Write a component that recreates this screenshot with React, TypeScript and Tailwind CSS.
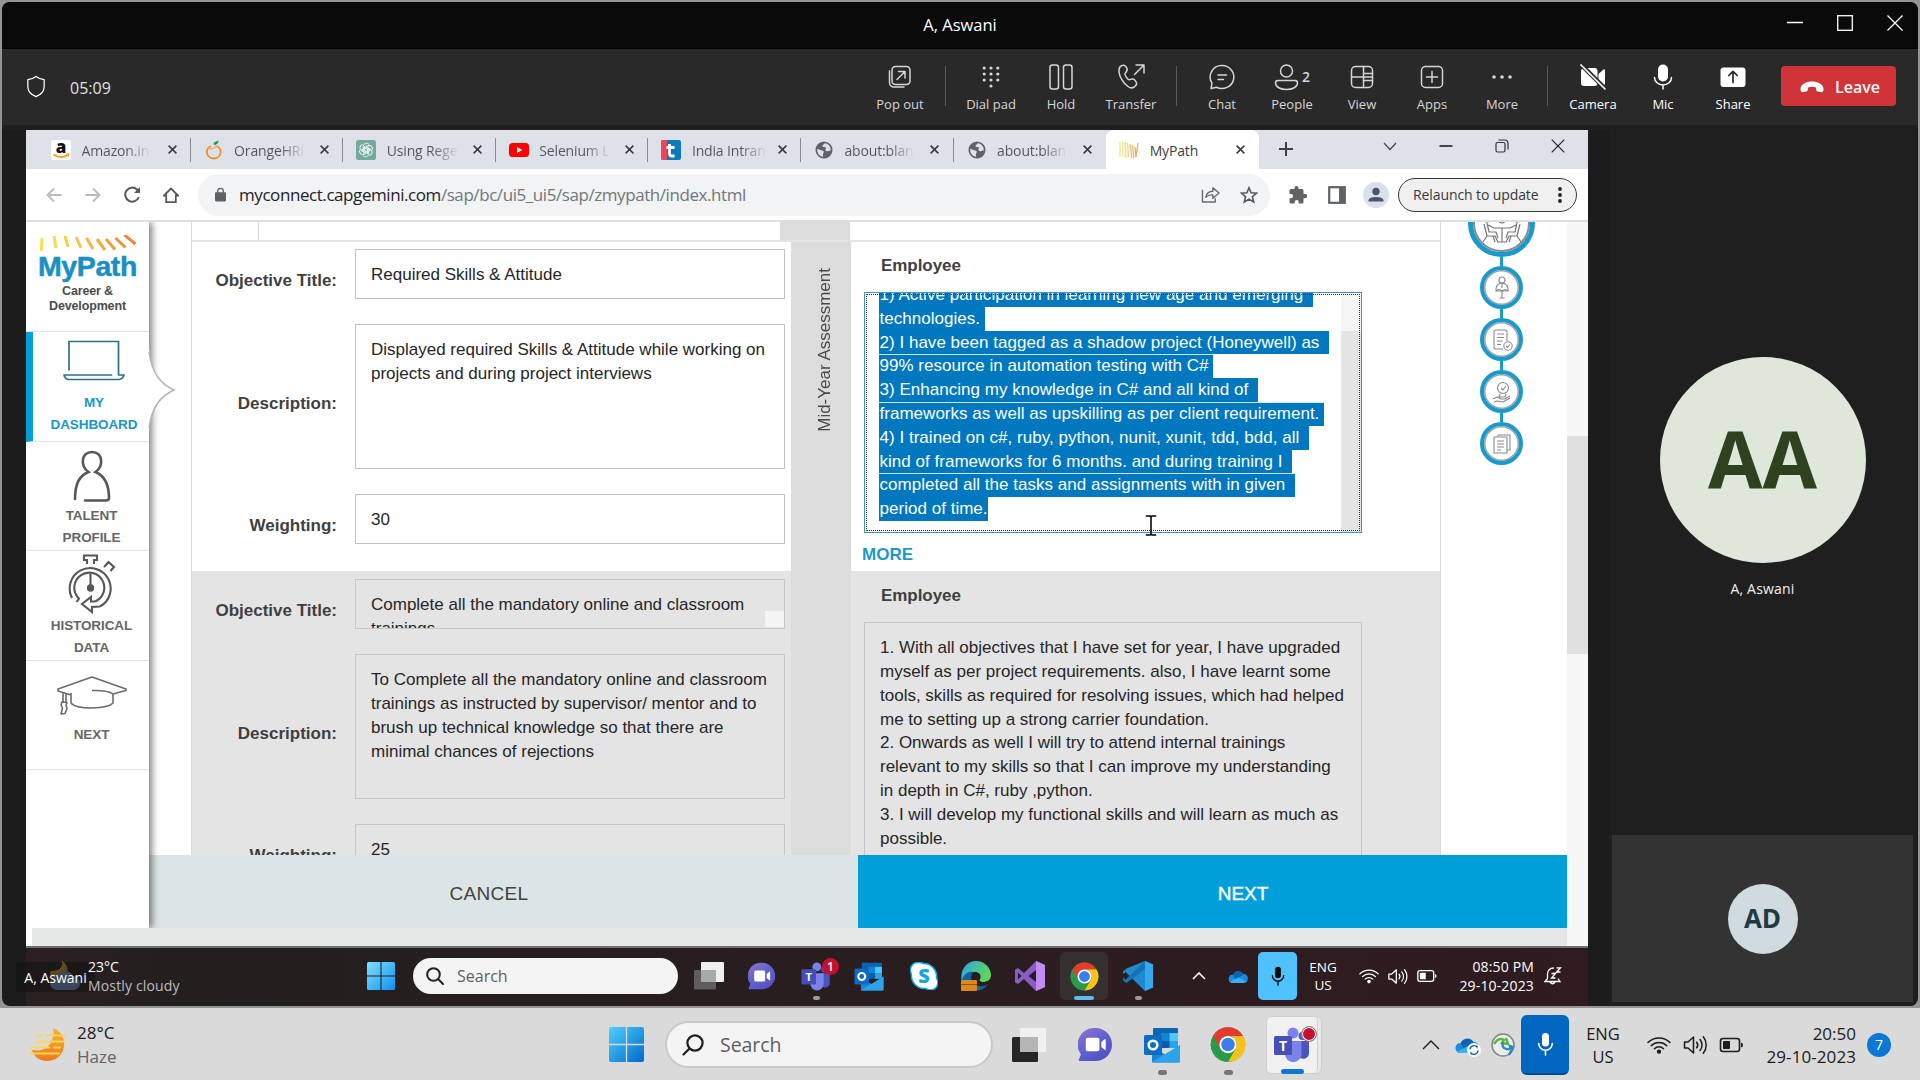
import type { ReactNode } from "react";

const segoe = "font-['Open_Sans','Noto_Sans',sans-serif]";
const arial = "font-['Liberation_Sans',Arial,sans-serif]";

/* ---------- shared brand glyphs ---------- */

function WindowsLogo({ id, from, to, className }: { id: string; from: string; to: string; className: string }) {
  return (
    <svg viewBox="0 0 36 36" className={className}>
      <defs>
        <linearGradient id={id} x1="0" y1="0" x2="1" y2="1">
          <stop offset="0" stopColor={from} />
          <stop offset="1" stopColor={to} />
        </linearGradient>
      </defs>
      <path
        fill={`url(#${id})`}
        d="M2 0h15.3v17.3H0V2a2 2 0 0 1 2-2zM18.7 0H34a2 2 0 0 1 2 2v15.300H18.700zM0 18.700h17.300V36H2a2 2 0 0 1-2-2zM18.700 18.700H36V34a2 2 0 0 1-2 2H18.700z"
      />
    </svg>
  );
}

function ChromeLogo({ className }: { className: string }) {
  return (
    <svg viewBox="0 0 48 48" className={className}>
      <circle cx="24" cy="24" r="23" fill="#34a048" />
      <path d="M4.080 12.500A23 23 0 0 1 43.920 12.500H24A11.500 11.500 0 0 0 14 29.750z" fill="#e53a2d" />
      <path d="M43.920 12.500A23 23 0 0 1 24 47l10-17.250A11.500 11.500 0 0 0 24 12.500z" fill="#fbc116" />
      <path d="M24 47A23 23 0 0 1 4.080 12.500L14 29.750a11.500 11.500 0 0 0 20 0z" fill="#2b9a48" />
      <circle cx="24" cy="24" r="11.500" fill="#fff" />
      <circle cx="24" cy="24" r="9" fill="#3b7ded" />
    </svg>
  );
}

function TeamsLogo({ className }: { className: string }) {
  return (
    <svg viewBox="0 0 36 36" className={className}>
      <circle cx="28.500" cy="9" r="4" fill="#5059c9" />
      <path d="M22 14h13v11a6 6 0 0 1-11 4z" fill="#4b53bc" />
      <circle cx="19" cy="6" r="5.500" fill="#7b83eb" />
      <path d="M11 14h16.500v13a8.200 8.200 0 0 1-16.500 0z" fill="#7b83eb" />
      <rect x="0" y="9" width="18" height="19" rx="1.500" fill="#464eb8" />
      <text x="9" y="23.500" fill="#fff" fontSize="14" fontWeight="700" textAnchor="middle" fontFamily="Open Sans">T</text>
    </svg>
  );
}

function OutlookLogo({ className }: { className: string }) {
  return (
    <svg viewBox="0 0 36 36" className={className}>
      <path d="M10 1h23a1 1 0 0 1 1 1v18H9V2a1 1 0 0 1 1-1z" fill="#0a64b4" />
      <path d="M17 6h8.500v8H17z" fill="#1684d6" />
      <path d="M25.500 6H34v8h-8.500z" fill="#4ccaf8" />
      <path d="M17 14h8.500v7H17z" fill="#0d5da5" />
      <path d="M25.500 14H34v7h-8.500z" fill="#2aa5e8" />
      <path d="M8 19l14 9 14-10v16.500a1 1 0 0 1-1 1H9a1 1 0 0 1-1-1z" fill="#1b86d8" />
      <path d="M8 35L36 18v16.500a1 1 0 0 1-1 1H9z" fill="#2ba4ea" />
      <rect x="0" y="8" width="18" height="20" rx="1.500" fill="#0b6cc4" />
      <circle cx="9" cy="18" r="4.300" fill="none" stroke="#fff" strokeWidth="2.600" />
    </svg>
  );
}

function ChatLogo({ id, className }: { id: string; className: string }) {
  return (
    <svg viewBox="0 0 36 36" className={className}>
      <defs>
        <linearGradient id={id} x1="0" y1="0" x2=".7" y2="1">
          <stop offset="0" stopColor="#9a6fcf" />
          <stop offset=".5" stopColor="#5f66cf" />
          <stop offset="1" stopColor="#5450c0" />
        </linearGradient>
      </defs>
      <path d="M18 1a17 17 0 1 1 0 34H2c-1.200 0-1.500-.8-1-1.600L3 28A17 17 0 0 1 18 1z" fill={`url(#${id})`} />
      <rect x="8" y="11" width="14" height="14" rx="2" fill="#fff" />
      <path d="M24 15.500l3.500-3q1-.6 1 .7v9.600q0 1.300-1 .7l-3.500-3z" fill="#fff" />
    </svg>
  );
}

function Cloud({ className }: { className: string }) {
  return (
    <svg viewBox="0 0 24 16" className={className}>
      <path d="M6 6a7 7 0 0 1 12.500-1A5 5 0 0 1 24 10a5 5 0 0 1-5 6H5A5 5 0 0 1 6 6z" fill="#1a8be0" />
      <path d="M6 6a7 7 0 0 1 12.500-.500L9 13z" fill="#0a63b5" />
      <path d="M2.500 14.500L13 9l9 5.500a5 5 0 0 1-3 1.500H5q-1.500 0-2.500-1.500z" fill="#37b0f5" />
    </svg>
  );
}

function MicGlyph({ className }: { className: string }) {
  return (
    <svg viewBox="0 0 16 24" className={className} fill="none" stroke="currentColor" strokeWidth="1.600" strokeLinecap="round">
      <rect x="4.500" y="1" width="7" height="13.500" rx="3.500" fill="currentColor" stroke="none" />
      <path d="M1.200 11.500a6.800 6.800 0 0 0 13.600 0M8 18.300V23" />
    </svg>
  );
}

function Wifi({ className }: { className: string }) {
  return (
    <svg viewBox="0 0 24 18" className={className} fill="none" stroke="currentColor" strokeWidth="1.500" strokeLinecap="round">
      <path d="M1 6.500a15.500 15.500 0 0 1 22 0M4.200 9.800a11 11 0 0 1 15.600 0M7.500 12.700a6.400 6.400 0 0 1 9 0" />
      <circle cx="12" cy="15.700" r="1.400" fill="currentColor" />
    </svg>
  );
}

function Speaker({ className }: { className: string }) {
  return (
    <svg viewBox="0 0 24 20" className={className} fill="none" stroke="currentColor" strokeWidth="1.500" strokeLinecap="round" strokeLinejoin="round">
      <path d="M1 7v6h3.500l5.500 5V2L4.500 7zM13.200 7.200a4.500 4.500 0 0 1 0 5.600M16.500 4.500a8.500 8.500 0 0 1 0 11M19.800 1.800a13 13 0 0 1 0 16.400" />
    </svg>
  );
}

function Battery({ className }: { className: string }) {
  return (
    <svg viewBox="0 0 24 16" className={className}>
      <rect x="1" y="1.500" width="19" height="13" rx="2.500" fill="none" stroke="currentColor" strokeWidth="1.600" />
      <rect x="3.500" y="4" width="7" height="8" rx=".8" fill="currentColor" />
      <path d="M21.500 5.500q2 .5 2 2.500t-2 2.500z" fill="currentColor" />
    </svg>
  );
}

/* ---------- call window ---------- */

function CallTitleBar() {
  return (
    <div className="relative flex h-[47px] items-center justify-center border-b border-black bg-[#0a0a0a] text-white">
      <span className="text-[16.500px] leading-none">A, Aswani</span>
      <div className="absolute right-[15px] top-[13px] flex gap-[34px]">
        <svg viewBox="0 0 16 16" className="h-4 w-4" stroke="#fff" fill="none"><path d="M0 7.500h16" strokeWidth="1.300" /></svg>
        <svg viewBox="0 0 16 16" className="h-4 w-4" stroke="#fff" fill="none"><rect x=".7" y=".7" width="14.600" height="14.600" strokeWidth="1.300" /></svg>
        <svg viewBox="0 0 16 16" className="h-4 w-4" stroke="#fff" fill="none"><path d="M.5.5l15 15m0-15l-15 15" strokeWidth="1.300" /></svg>
      </div>
    </div>
  );
}

function CallButton({ label, bright, children }: { label: string; bright?: boolean; children: ReactNode }) {
  return (
    <div className={`flex w-[70px] flex-col items-center ${bright ? "text-white" : "text-[#d6d6d6]"}`}>
      <svg viewBox="0 0 28 28" className="h-7 w-7 overflow-visible" fill="none" stroke="currentColor" strokeWidth="1.500" strokeLinecap="round" strokeLinejoin="round">
        {children}
      </svg>
      <span className="mt-[5px] whitespace-nowrap text-[13px] leading-[16px]">{label}</span>
    </div>
  );
}

function CallSeparator() {
  return <div className="mx-[10px] mt-[3px] h-10 w-px bg-[#5a5a5a]" />;
}

function CallToolbar() {
  const cols = [7.200, 14, 20.800];
  const rows = [5, 11, 17];
  return (
    <div className="flex h-[76px] bg-[#292929]">
      <svg viewBox="0 0 20 24" className="ml-6 mt-[26px] h-[23px] w-5" fill="none" stroke="#fff" strokeWidth="1.300" strokeLinejoin="round">
        <path d="M10 1.500c2.500 2 5 3 8.500 3.200V12c0 5-3 8.500-8.500 10.500C4.500 20.500 1.500 17 1.500 12V4.700C5 4.500 7.500 3.500 10 1.500z" />
      </svg>
      <span className="ml-[24px] mt-[28px] text-[16px] leading-[22px] text-[#e0e0e0]">05:09</span>
      <div className="ml-auto flex pr-[22px] pt-[14px]">
        <CallButton label="Pop out">
          <path d="M3.500 8v11.500a4.500 4.500 0 0 0 4.500 4.500h10" />
          <rect x="6" y="3.500" width="18" height="18" rx="3.500" />
          <path d="M11 16.500l8-8m-6.500 0H19V15" />
        </CallButton>
        <CallSeparator />
        <CallButton label="Dial pad">
          <g fill="currentColor" stroke="none">
            {rows.map((y) => cols.map((x) => <circle key={`${x}-${y}`} cx={x} cy={y} r="1.600" />))}
            <circle cx="14" cy="23" r="1.600" />
          </g>
        </CallButton>
        <CallButton label="Hold">
          <rect x="3" y="2" width="8.500" height="24" rx="2.500" />
          <rect x="16.500" y="2" width="8.500" height="24" rx="2.500" />
        </CallButton>
        <CallButton label="Transfer">
          <path d="M4 3c3-2 5 0 6 2.500.8 2-.8 3.500-2 5-.6 1 2.500 6.500 4.500 6.300 1.500-.5 3-1.800 4.700-.3 1.500 1.500 3.500 3.500 2 5.500C17 25 14.500 26 11 23.500 6 20 2.500 13.500 2 9c-.2-2.500.3-5 2-6z" />
          <path d="M17.500 11.500L27 2m-8 0h8v8" />
        </CallButton>
        <CallSeparator />
        <CallButton label="Chat">
          <path d="M14 2.500a12 11.500 0 1 1-5.500 21.800L3 25.500l1-5.300A11.500 11.500 0 0 1 14 2.500zM10 12h8.500M10 16.500h5.500" />
        </CallButton>
        <CallButton label="People">
          <circle cx="8.500" cy="8" r="6" />
          <path d="M-2.500 20q0-2.500 2.500-2.500h17q2.500 0 2.500 2.500c0 4-5 6.500-11 6.500s-11-2.500-11-6.500z" />
          <text x="24" y="19" fill="currentColor" stroke="none" fontSize="14" fontWeight="600">2</text>
        </CallButton>
        <CallButton label="View">
          <rect x="3.500" y="3.500" width="21" height="21" rx="4" />
          <path d="M15.500 3.500v21M3.500 14h21M15.500 10.500h9M15.500 17.500h9" />
        </CallButton>
        <CallButton label="Apps">
          <rect x="3.500" y="3.500" width="21" height="21" rx="4" />
          <path d="M14 8.500v11M8.500 14h11" />
        </CallButton>
        <CallButton label="More">
          <g fill="currentColor" stroke="none">
            <circle cx="6" cy="14" r="1.800" />
            <circle cx="14" cy="14" r="1.800" />
            <circle cx="22" cy="14" r="1.800" />
          </g>
        </CallButton>
        <CallSeparator />
        <CallButton label="Camera" bright>
          <path d="M4 5h11.500q3 0 3 3v12q0 3-3 3H5q-3 0-3-3V8q0-1.500 2-3zM19.500 11l5-4.500q1.500-.8 1.500 1v13q0 1.800-1.500 1l-5-4.500z" fill="currentColor" stroke="none" />
          <path d="M2 1.500l24 24" stroke="#292929" strokeWidth="4.500" />
          <path d="M2 2l24 24" strokeWidth="1.700" />
        </CallButton>
        <CallButton label="Mic" bright>
          <rect x="9" y="1.500" width="10" height="17" rx="5" fill="currentColor" stroke="none" />
          <path d="M5.500 14.500a8.500 7.500 0 0 0 17 0M14 22v4" />
        </CallButton>
        <CallButton label="Share" bright>
          <rect x="1.500" y="4.500" width="25" height="19.500" rx="3" fill="currentColor" stroke="none" />
          <path d="M14 19.500v-11M9.800 12.500L14 8.300l4.200 4.200" stroke="#292929" strokeWidth="1.700" />
        </CallButton>
        <div className="ml-[13px] mt-[3px] flex h-10 w-[115px] items-center rounded-[4px] bg-[#d13438] pl-[19px] pt-[2px] text-white">
          <svg viewBox="0 0 24 12" className="h-3 w-6" fill="currentColor">
            <path d="M12 .5c5.500 0 11.500 2.500 11.500 7.500 0 2.800-1 3.500-3 3.100l-2.500-.5c-1.500-.3-2-1.300-1.900-2.800 0-1.200.3-1.800-4.100-1.800s-4.100.6-4.100 1.800c.1 1.500-.4 2.500-1.900 2.800l-2.500.5c-2 .4-3-.3-3-3.100C.5 3 6.500.5 12 .5z" />
          </svg>
          <span className="ml-[11px] text-[16px] font-semibold">Leave</span>
        </div>
      </div>
    </div>
  );
}

/* ---------- browser ---------- */

const favs = {
  amazon: (
    <svg viewBox="0 0 20 20" className="h-5 w-5">
      <rect width="20" height="20" rx="2" fill="#fff" />
      <text x="10" y="13" textAnchor="middle" fontSize="17" fontWeight="800" fontFamily="Open Sans" fill="#111">a</text>
      <path d="M2.500 14.500q7 5 14 .5" fill="none" stroke="#f59b1c" strokeWidth="1.700" />
      <path d="M15 14h2.800l-.6 2.600" fill="none" stroke="#f59b1c" strokeWidth="1.200" />
    </svg>
  ),
  orange: (
    <svg viewBox="0 0 20 20" className="h-5 w-5 overflow-visible" fill="none">
      <path d="M7 6a7 6.500 0 1 0 5.500 0" stroke="#ee8d2f" strokeWidth="1.800" />
      <path d="M3.500 8.500q6 1.500 8.500-2.500" stroke="#f5ab5e" strokeWidth="1.200" />
      <path d="M9.500 4.500C9.500 1.500 12 2 14.500.5c.3 3-2.500 5.500-5 4z" fill="#2c9c4a" />
    </svg>
  ),
  gpt: (
    <svg viewBox="0 0 20 20" className="h-5 w-5" fill="none" stroke="#e8f5f0" strokeWidth="1">
      <rect width="20" height="20" rx="2.500" fill="#74aa9c" stroke="none" />
      {[0, 60, 120, 180, 240, 300].map((a) => (
        <path key={a} transform={`rotate(${a} 10 10)`} d="M7.200 11.600V6.200a3.300 3.300 0 0 1 5.800-1.800M8.500 9.200l4.300-2.500" />
      ))}
    </svg>
  ),
  youtube: (
    <svg viewBox="0 0 20 14" className="h-[14px] w-5">
      <rect width="20" height="14" rx="3.500" fill="#f00" />
      <path d="M8 4l5.300 3L8 10z" fill="#fff" />
    </svg>
  ),
  t: (
    <svg viewBox="0 0 20 20" className="h-5 w-5">
      <rect width="20" height="20" rx="2" fill="#0b7ab8" />
      <path d="M2 0h4v20H2a2 2 0 0 1-2-2V2a2 2 0 0 1 2-2z" fill="#e8455f" />
      <path d="M8.500 4v9.500q0 2.500 2.500 2.500h2.500M5.500 7.500h8" fill="none" stroke="#fff" strokeWidth="2.800" />
    </svg>
  ),
  globe: (
    <svg viewBox="0 0 20 20" className="h-[18px] w-[18px]">
      <circle cx="10" cy="10" r="9.500" fill="#5f6368" />
      <path d="M2.500 8.500c2 .5 4 2 5.500 2s2 1.500 1.500 2.500-1 2-.5 4.500c-4-.5-7-4-6.500-9zM11 2.500c-1 1.500-3 1.500-2.500 3.500.5 1.500 3 0 3.500 1.500s-1.500 2.500.5 3.500c2 .8 4-.5 5-.5.3-4-2.500-7.500-6.500-8z" fill="#dee1e8" />
    </svg>
  ),
  mypath: (
    <svg viewBox="0 0 20 18" className="h-[18px] w-5" fill="none" strokeWidth="1.300">
      <path d="M1 1v15M3.500 1l.5 15" stroke="#f9e48c" />
      <path d="M6 1l1 16M8.500 2l1 14" stroke="#f8d27c" />
      <path d="M11 3l2 14M13.500 4l1.500 13" stroke="#f4b870" />
      <path d="M16 6l1 10 2-14" stroke="#efa95c" />
    </svg>
  ),
};

const tabs: { title: string; icon: ReactNode; active?: boolean }[] = [
  { title: "Amazon.in", icon: favs.amazon },
  { title: "OrangeHRI", icon: favs.orange },
  { title: "Using Rege", icon: favs.gpt },
  { title: "Selenium L", icon: favs.youtube },
  { title: "India Intran", icon: favs.t },
  { title: "about:blan", icon: favs.globe },
  { title: "about:blan", icon: favs.globe },
  { title: "MyPath", icon: favs.mypath, active: true },
];

function TabStrip() {
  return (
    <div className="flex h-[39px] bg-[#dee1e8] pl-[12px]">
      {tabs.map((t, i) => (
        <div
          key={i}
          className={`flex h-[39px] w-[152.600px] items-center pl-[13px] ${t.active ? "rounded-t-[8px] bg-white" : ""}`}
        >
          <span className="flex w-5 justify-center">{t.icon}</span>
          <span className="ml-[10.500px] w-[71px]">
            <span
              className={`inline-block whitespace-nowrap text-[14px] leading-5 tracking-[-0.150px] ${
                t.active ? "text-[#3c4043]" : "bg-gradient-to-r from-[#50555a] from-65% to-[#d6d9e0] bg-clip-text text-transparent"
              }`}
            >
              {t.title}
            </span>
          </span>
          <svg viewBox="0 0 10 10" className="ml-[15px] h-[9px] w-[9px] shrink-0" stroke="#36393d" strokeWidth="1.700" fill="none">
            <path d="M.7.7l8.600 8.600m0-8.600L.7 9.300" />
          </svg>
          {i < 6 && <span className="ml-auto h-6 w-px bg-[#878b92]" />}
        </div>
      ))}
      <svg viewBox="0 0 14 14" className="ml-[20px] mt-[12px] h-[14px] w-[14px]" stroke="#3c4043" strokeWidth="2"><path d="M7 0v14M0 7h14" /></svg>
      <div className="ml-auto mr-[23px] flex items-center gap-[42px] pb-[7px]">
        <svg viewBox="0 0 14 14" className="h-[14px] w-[14px]" stroke="#444" fill="none" strokeWidth="1.200"><path d="M1 4l6 6.500L13 4" /></svg>
        <svg viewBox="0 0 14 14" className="h-[14px] w-[14px]" stroke="#111" fill="none" strokeWidth="1.400"><path d="M.5 7h13" /></svg>
        <svg viewBox="0 0 14 14" className="h-[14px] w-[14px]" stroke="#333" fill="none" strokeWidth="1.200"><rect x="1" y="3.500" width="9" height="9.500" rx="1.500" /><path d="M3.500 1h6q3.500 0 3.500 3.500v6" /></svg>
        <svg viewBox="0 0 14 14" className="h-[14px] w-[14px]" stroke="#222" fill="none" strokeWidth="1.200"><path d="M.7.7l12.600 12.600m0-12.600L.7 13.300" /></svg>
      </div>
    </div>
  );
}

function AddressBar() {
  return (
    <div className="flex h-[53px] items-center border-b-2 border-[#dedfe0] bg-white pl-5">
      <svg viewBox="0 0 16 16" className="h-4 w-4" stroke="#babcbe" strokeWidth="1.900" fill="none"><path d="M15.500 8H1.500M8 1.500L1.500 8 8 14.500" /></svg>
      <svg viewBox="0 0 16 16" className="ml-[23px] h-4 w-4" stroke="#babcbe" strokeWidth="1.900" fill="none"><path d="M.5 8h14M8 1.500L14.500 8 8 14.500" /></svg>
      <svg viewBox="0 0 17 17" className="ml-[23px] h-[17px] w-[17px]" stroke="#55595d" strokeWidth="2" fill="none"><path d="M14.800 11A7 7 0 1 1 13 3.500l2 2" /><path d="M16 1v6h-6z" fill="#55595d" stroke="none" /></svg>
      <svg viewBox="0 0 16 16" className="ml-[22px] h-4 w-4" stroke="#55595d" strokeWidth="1.800" fill="none"><path d="M8 1.500L1 8.500h2.200v6.600h9.600V8.500H15z" /></svg>
      <div className="ml-[19px] flex h-[42px] w-[1072px] items-center rounded-full bg-[#f1f3f4] pl-[17px]">
        <svg viewBox="0 0 12 15" className="h-[15px] w-[11px]"><rect y="5" width="12" height="10" rx="1.200" fill="#5f6368" /><path d="M3 6V3.800a3 3 0 0 1 6 0V6" fill="none" stroke="#5f6368" strokeWidth="1.500" /></svg>
        <span className="ml-[13px] whitespace-nowrap text-[17px] tracking-[-0.430px] text-[#71767b]">
          <span className="text-[#1f2226]">myconnect.capgemini.com</span>/sap/bc/ui5_ui5/sap/zmypath/index.html
        </span>
        <svg viewBox="0 0 20 18" className="ml-auto h-[17px] w-[19px]" fill="none" stroke="#666a6e" strokeWidth="1.500" strokeLinejoin="round"><path d="M1.500 4v13H15v-4" /><path d="M5 12q1-6.500 7.500-6.500V2L19 7.500 12.500 13V9.500Q8 9 5 12z" /></svg>
        <svg viewBox="0 0 18 18" className="ml-5 mr-[12px] h-[18px] w-[18px]" fill="none" stroke="#55595d" strokeWidth="1.600"><path d="M9 1.800l2.100 5 5.400.4-4.100 3.500 1.300 5.300L9 13.100 4.300 16l1.300-5.300-4.100-3.500 5.400-.4z" /></svg>
      </div>
      <svg viewBox="0 0 18 18" className="ml-[19px] h-[18px] w-[18px]" fill="#5f6368"><path d="M16 8h-1.500V4.500A1.500 1.500 0 0 0 13 3H9.500V2a2 2 0 0 0-4 0v1H2a1.500 1.500 0 0 0-1.500 1.500V8H2a2 2 0 0 1 0 4.200H.5v3.800A1.500 1.500 0 0 0 2 17.500h3.700V16a2 2 0 0 1 4 0v1.500H13a1.500 1.500 0 0 0 1.500-1.500v-3.800H16a2.100 2.100 0 0 0 0-4.200z" /></svg>
      <svg viewBox="0 0 18 18" className="ml-[21px] h-[18px] w-[18px]"><rect x="1.200" y="1.200" width="15.600" height="15.600" fill="#fff" stroke="#5f6368" strokeWidth="2.200" /><rect x="11" y="1" width="6" height="16" fill="#5f6368" /></svg>
      <svg viewBox="0 0 26 26" className="ml-[17px] h-[26px] w-[26px]"><circle cx="13" cy="13" r="13" fill="#dbe0ea" /><circle cx="13" cy="9.500" r="3.700" fill="#4a5672" /><path d="M5.500 19.500v-1q0-3.500 7.500-3.500t7.500 3.500v1z" fill="#4a5672" /></svg>
      <div className="ml-[9px] flex h-[34px] w-[179px] items-center rounded-full border-[1.500px] border-[#36393c] bg-[#f0f0f0] pl-[14px] text-[14px] tracking-[-0.100px] text-[#36393c]">
        <span className="whitespace-nowrap">Relaunch to update</span>
        <svg viewBox="0 0 4 16" className="ml-[19px] h-4 w-1"><circle cx="2" cy="2" r="1.900" fill="#222" /><circle cx="2" cy="8" r="1.900" fill="#222" /><circle cx="2" cy="14" r="1.900" fill="#222" /></svg>
      </div>
    </div>
  );
}

/* ---------- MyPath page ---------- */

const dashes = [
  { c: "#f6e04a", x: 3, dx: -0.500, y1: 3, y2: 16 },
  { c: "#f6dc4a", x: 15, dx: 2, y1: 1, y2: 13 },
  { c: "#f5d046", x: 26, dx: 3, y1: 1, y2: 12 },
  { c: "#f4c544", x: 37, dx: 5, y1: 2, y2: 13 },
  { c: "#f2b840", x: 47.500, dx: 6.500, y1: 3, y2: 14 },
  { c: "#f0ab3c", x: 58, dx: 8, y1: 4, y2: 15 },
  { c: "#ee9f3a", x: 67, dx: 9, y1: 4, y2: 14.500 },
  { c: "#eb9438", x: 76.500, dx: 10, y1: 3, y2: 12.500 },
  { c: "#e88a3a", x: 85.500, dx: 11, y1: 0, y2: 9 },
];

function SideItem({ lines, pad, children, active }: { lines: string[]; pad: string; children: ReactNode; active?: boolean }) {
  return (
    <div className={`flex flex-col items-center border-b border-[#e2e4e5] ${active ? "h-[110px] border-l-[7px] border-l-[#009fda] pl-[6px] text-[#1a97c6]" : "h-[109.300px] pl-[8px] text-[#666]"}`}>
      {children}
      <div className={`text-center text-[13.500px] font-bold leading-[22px] tracking-[-0.100px] ${pad}`}>
        {lines.map((l) => <div key={l}>{l}</div>)}
      </div>
    </div>
  );
}

function Sidebar() {
  return (
    <div className="relative z-10 w-[123px] shrink-0 bg-white shadow-[3px_0_7px_rgba(0,0,0,0.500)]">
      <div className="flex h-[110px] flex-col items-center border-b border-[#e2e4e5] pt-[13px]">
        <svg viewBox="0 0 98 16" className="h-4 w-[98px]" strokeWidth="3">
          {dashes.map((d) => <line key={d.c} x1={d.x} y1={d.y1} x2={d.x + d.dx} y2={d.y2} stroke={d.c} />)}
        </svg>
        <div className="text-[28.500px] font-bold leading-[30px] tracking-[-0.400px] text-[#1a90c2] [-webkit-text-stroke:0.500px_#1a90c2]">MyPath</div>
        <div className="mt-[3px] text-center text-[12.500px] font-bold leading-[15px] tracking-[-0.150px] text-[#4c4c4c]">
          <div>Career &amp;</div>
          <div>Development</div>
        </div>
      </div>
      <SideItem lines={["MY", "DASHBOARD"]} pad="mt-[10px]" active>
        <svg viewBox="0 0 62 42" className="mt-[8px] h-[42px] w-[62px]" fill="none" stroke="#2f6f8a" strokeWidth="1.700" strokeLinecap="round">
          <path d="M6 30V1.500h49.500V35M2 35h46.500M1 35q1 4 4.500 4.500H56q4-.5 5-4.500h-5" />
        </svg>
      </SideItem>
      <SideItem lines={["TALENT", "PROFILE"]} pad="mt-[3px]">
        <svg viewBox="0 0 38 52" className="mt-[8px] h-[52px] w-[38px]" fill="none" stroke="#575757" strokeWidth="2.600" strokeLinecap="round">
          <path d="M2 49C2 34 6 26 15.500 22 7 16 8 2 19 2s12 14 3.500 20C32 26 36 34 36 48q0 2.500-3 2.500H12" />
        </svg>
      </SideItem>
      <SideItem lines={["HISTORICAL", "DATA"]} pad="mt-[1px]">
        <svg viewBox="0 0 48 60" className="mt-[3px] h-[60px] w-12" fill="none" stroke="#575757" strokeWidth="2.100">
          <path d="M19 10V6h-3V1.500h13V6h-3v4M37 12l3.500-4 5.500 5-3.500 4M36 13l3-3" />
          <path d="M4 44A20.500 20.500 0 1 1 32 52.500M8.500 48l2.500-3.500-1-1A15 15 0 1 1 27 47.500M32 52.500l-8 .5v5L14 50l9-7v4.500h4" />
          <path d="M22.500 20v14" />
          <circle cx="22.500" cy="34" r="2.600" fill="#575757" />
        </svg>
      </SideItem>
      <SideItem lines={["NEXT"]} pad="mt-[8px]">
        <svg viewBox="0 0 70 40" className="mt-[15px] h-10 w-[70px]" fill="none" stroke="#6b6b6b" strokeWidth="1.600" strokeLinejoin="round">
          <path d="M56 18l13-3.500v-1.500L35 1 1 13v2l13 4M6 17v9M9 18v8M5 26l-1 3 1.500 3L4 38l4-.5 2-5-1-3 1-3zM14 17v10q4 5 21 5 17-.5 21-5v-9q-5-4-21-3.500" />
        </svg>
      </SideItem>
      <svg viewBox="0 0 30 84" className="absolute left-[121px] top-[126px] h-[84px] w-[30px] overflow-visible">
        <path d="M0 0h2C4 26 14 36 27 42 14 48 4 58 2 84H0z" fill="#fff" />
        <path d="M2 4C5 26 14 36 27 42 14 48 5 58 2 80" fill="none" stroke="#b4b4b4" strokeWidth="1.500" />
      </svg>
    </div>
  );
}

function Field({ label, value, tall, gray, clipped }: { label: string; value: string[]; tall?: boolean; gray?: boolean; clipped?: boolean }) {
  return (
    <div className="flex">
      <div className="flex w-[145px] items-center justify-end pt-[14px] text-[17px] font-bold text-[#3f3f3f]">{label}</div>
      <div
        className={`ml-[18px] flex w-[430px] justify-between overflow-hidden border pl-[15px] pt-[13px] text-[17px] leading-6 text-[#262626] ${
          tall ? "h-[145px]" : "h-[50px]"
        } ${gray ? "border-[#c6c6c6]" : "border-[#c2c2c2]"}`}
      >
        <div className="whitespace-nowrap">
          {value.map((v) => <div key={v}>{v}</div>)}
        </div>
        {clipped && <div className="mt-[18px] h-4 w-[19px] shrink-0 bg-[#f4f4f4]" />}
      </div>
    </div>
  );
}

const selected = [
  { t: "1) Active participation in learning new age and emerging", w: "w-[433.500px]", gap: false },
  { t: "technologies.", w: "w-[106px]", gap: false },
  { t: "2) I have been tagged as a shadow project (Honeywell) as", w: "w-[449.500px]", gap: false },
  { t: "99% resource in automation testing with C#", w: "w-[334px]", gap: true },
  { t: "3) Enhancing my knowledge in C# and all kind of", w: "w-[378.500px]", gap: false },
  { t: "frameworks as well as upskilling as per client requirement.", w: "w-[445px]", gap: true },
  { t: "4) I trained on c#, ruby, python, nunit, xunit, tdd, bdd, all", w: "w-[429.500px]", gap: false },
  { t: "kind of frameworks for 6 months. and during training I", w: "w-[413px]", gap: false },
  { t: "completed all the tasks and assignments with in given", w: "w-[415.500px]", gap: true },
  { t: "period of time.", w: "w-[109px]", gap: false },
];

const review = [
  "1. With all objectives that I have set for year, I have upgraded",
  "myself as per project requirements. also, I have learnt some",
  "tools, skills as required for resolving issues, which had helped",
  "me to setting up a strong carrier foundation.",
  "2. Onwards as well I will try to attend internal trainings",
  "relevant to my skills so that I can improve my understanding",
  "in depth in C#, ruby ,python.",
  "3. I will develop my functional skills and will learn as much as",
  "possible.",
];

function ObjectiveTable() {
  return (
    <div className="w-[1250px] shrink-0 border-x border-[#dcdcdc]">
      <div className="flex h-5 border-b-2 border-[#e3e3e3]">
        <div className="w-[67px] border-r border-[#d6d6d6]" />
        <div className="w-[521px]" />
        <div className="w-[70px] bg-[#dcdcdc]" />
      </div>
      <div className="flex h-[329px]">
        <div className="flex w-[599px] flex-col gap-[25px] pt-[7px]">
          <Field label="Objective Title:" value={["Required Skills & Attitude"]} />
          <Field label="Description:" tall value={["Displayed required Skills & Attitude while working on", "projects and during project interviews"]} />
          <Field label="Weighting:" value={["30"]} />
        </div>
        <div className="flex w-[60px] items-start justify-center bg-[#dcdcdc] pl-[8px] pt-[26px]">
          <span className="rotate-180 whitespace-nowrap text-[17px] leading-5 text-[#484848] [writing-mode:vertical-rl]">Mid-Year Assessment</span>
        </div>
        <div className="flex flex-col">
          <div className="ml-[30px] mt-[14px] text-[17px] font-bold leading-5 tracking-[-0.050px] text-[#3f3f3f]">Employee</div>
          <div className="relative ml-[13px] mt-[16px] h-[241px] w-[498px] border border-[#3e94c4] bg-white">
            <div className="flex h-[239px] justify-between overflow-hidden">
              <div className="-mt-[10px] ml-[14px] text-[17px] leading-[23.800px] tracking-[0.025px] text-white">
                {selected.map((l) => (
                  <div key={l.t} className={`h-[23.800px] whitespace-nowrap bg-[#0078bf] pl-[0.500px] ${l.w} ${l.gap ? "shadow-[inset_0_1px_0_#cfe6f3]" : ""}`}>
                    {l.t}
                  </div>
                ))}
              </div>
              <div className="w-5 bg-[#e4e4e4]">
                <div className="h-[38px] bg-[#f5f5f5]" />
              </div>
            </div>
            <div className="pointer-events-none absolute inset-px border border-dotted border-[#333]" />
            <svg viewBox="0 0 12 22" className="absolute left-[280px] top-[222px] h-[21px] w-3" stroke="#000" strokeWidth="1.600" fill="none">
              <path d="M.5 1H5l1 1 1-1h4.500M.5 21H5l1-1 1 1h4.500M6 2v18" />
            </svg>
          </div>
          <div className="ml-[11px] mt-[12px] text-[17px] font-bold leading-5 text-[#1a9acb]">MORE</div>
        </div>
      </div>
      <div className="flex h-[330px] bg-[#e4e4e4]">
        <div className="flex w-[599px] flex-col gap-[25px] pt-[8px]">
          <Field gray clipped label="Objective Title:" value={["Complete all the mandatory online and classroom", "trainings"]} />
          <Field
            gray
            tall
            label="Description:"
            value={[
              "To Complete all the mandatory online and classroom",
              "trainings as instructed by supervisor/ mentor and to",
              "brush up technical knowledge so that there are",
              "minimal chances of rejections",
            ]}
          />
          <Field gray label="Weighting:" value={["25"]} />
        </div>
        <div className="w-[60px] bg-[#dcdcdc]" />
        <div className="flex flex-col">
          <div className="ml-[30px] mt-[15px] text-[17px] font-bold leading-5 tracking-[-0.050px] text-[#3f3f3f]">Employee</div>
          <div className="ml-[13px] mt-[16px] h-[300px] w-[498px] border border-[#c6c6c6] pl-[15px] pt-[13px] text-[17px] leading-[23.850px] text-[#262626]">
            {review.map((l) => <div key={l} className="whitespace-nowrap">{l}</div>)}
          </div>
        </div>
      </div>
    </div>
  );
}

function Step({ children }: { children: ReactNode }) {
  return (
    <>
      <div className="h-[9px] w-[3px] shrink-0 bg-[#1a9acb]" />
      <div className="flex h-[43px] w-[43px] shrink-0 items-center justify-center rounded-full border-4 border-[#1a9acb] bg-white shadow-[inset_0_0_0_1.500px_#a5a5a5]">
        <svg viewBox="0 0 24 24" className="h-6 w-6" fill="none" stroke="#8a8a8a" strokeWidth="1.100" strokeLinejoin="round">{children}</svg>
      </div>
    </>
  );
}

function Timeline() {
  return (
    <div className="flex w-[126px] flex-col items-center pr-[5px]">
      <div className="-mt-[32px] flex h-[67px] w-[67px] shrink-0 items-center justify-center rounded-full border-[5px] border-[#1a9acb] bg-white shadow-[inset_0_0_0_2px_#8a8a8a]">
        <svg viewBox="0 0 40 30" className="mt-[10px] h-[30px] w-10" fill="none" stroke="#777" strokeWidth="1.200" strokeLinejoin="round">
          <path d="M12 14h16M20 14v14M15 28h10M2 10l3 12h8l3 6M38 10l-3 12h-8l-3 6M5 22L1 28M11 22l2 6M35 22l4 6M29 22l-2 6M5 9l2 9h7l2 6M35 9l-2 9h-7l-2 6M6 11l6 3M34 11l-6 3" />
          <circle cx="5" cy="5" r="3" />
          <circle cx="35" cy="5" r="3" />
          <circle cx="20" cy="6" r="3" />
        </svg>
      </div>
      <Step>
        <circle cx="12" cy="4" r="3" />
        <path d="M6 15q-.5-6 4-7.500h4q4.500 1.500 4 7.500M12 8v4M6 15q3-3 6 0 3-3 6 0zM12 15v7M9.500 22h5" />
      </Step>
      <Step>
        <path d="M17 13V4q0-2-2-2H6Q4 2 4 4v15q0 2 2 2h7M7 6h7M7 9.500h7M7 13h6M7 16.500h4" />
        <circle cx="18" cy="18" r="4.200" />
        <path d="M16 18l1.500 1.500 2.500-3" />
      </Step>
      <Step>
        <circle cx="13" cy="8" r="5.500" />
        <path d="M11 8l2 2 3-4M10 14l-1 3h6l1-3M3 19l4-2 4 2h4l5-3M4 22l3-1 6 1 7-4" />
      </Step>
      <Step>
        <path d="M8 5V3h12v15h-3M4 5h13v16H4zM7 9h7M7 12h7M7 15h7M7 18h4" />
      </Step>
    </div>
  );
}

function MyPathPage() {
  return (
    <div className={`flex h-[724px] bg-white ${arial}`}>
      <div className="flex w-[1541px] flex-col">
        <div className="flex h-[706px] overflow-hidden">
          <Sidebar />
          <div className="flex w-[1418px] flex-col">
            <div className="flex h-[633px] overflow-hidden pl-[42px]">
              <ObjectiveTable />
              <Timeline />
            </div>
            <div className="flex h-[73px] text-[19px]">
              <div className="flex w-[709px] items-center justify-center bg-[#dbe5e5] pr-[29px] pt-[6px] tracking-[0.300px] text-[#424242]">CANCEL</div>
              <div className="flex w-[709px] items-center justify-center bg-[#009fda] pl-[61px] pt-[6px] text-white [-webkit-text-stroke:0.400px_white]">NEXT</div>
            </div>
          </div>
        </div>
        <div className="ml-[6px] flex-1 bg-[#e5e6e6]" />
      </div>
      <div className="w-[21px] bg-[#f7f7f7] pt-[214px]">
        <div className="h-[218px] bg-[#e0e0e0]" />
      </div>
    </div>
  );
}

/* ---------- taskbar inside the shared screen ---------- */

function RemoteTaskbar() {
  return (
    <div className="relative flex h-[60px] items-center border-t-2 border-[#6f6d6d] bg-gradient-to-r from-[#2b2021] via-[#231f1f] via-10% to-[#2f1b20] pb-[2px] text-white">
      <svg viewBox="0 0 30 30" className="ml-6 h-[30px] w-[30px] shrink-0">
        <path d="M12 0c7 4 7 12 1 16H2C-1 14 0 10 2 10 10 10 13 6 12 0z" fill="#e9a825" />
        <path d="M7 29a7 7 0 0 1 0-14 9 9 0 0 1 16 0 7 7 0 0 1 0 14z" fill="#7fa6d8" />
      </svg>
      <div className="ml-[8px] w-[111px] text-[14px] leading-[19.500px]">
        <div className="relative z-20">23°C</div>
        <div className="relative z-20 whitespace-nowrap tracking-[0.150px] text-[#bdbdbd]">Mostly cloudy</div>
      </div>
      <WindowsLogo id="remote-win" from="#7fe0ff" to="#1090f0" className="ml-[168px] h-7 w-7" />
      <div className="ml-[18px] flex h-9 w-[265px] items-center rounded-full bg-[#f4f4f4] pl-[13px] text-[#5f5f5f]">
        <svg viewBox="0 0 18 18" className="h-[18px] w-[18px]" fill="none" stroke="#222" strokeWidth="2" strokeLinecap="round"><circle cx="7.500" cy="7.500" r="6.300" /><path d="M12.300 12.300L17 17" /></svg>
        <span className="ml-[13px] text-[16px]">Search</span>
      </div>
      <svg viewBox="0 0 30 28" className="ml-4 h-7 w-[30px]">
        <rect y="8" width="22" height="19.500" rx="1" fill="#5d5d5d" />
        <rect x="7" y="0" width="23" height="20" rx="1" fill="#f0f0f0" />
        <rect x="7" y="8" width="15" height="12" fill="#a9a9a9" />
      </svg>
      <ChatLogo id="remote-chat" className="ml-[24px] h-7 w-7" />
      <div className="relative ml-[25px] flex h-12 w-[30px] items-center justify-center">
        <TeamsLogo className="h-[29px] w-[30px]" />
        <span className="absolute -right-2 top-[6px] flex h-[17px] w-[17px] items-center justify-center rounded-full bg-[#c50f2f] text-[12px] font-semibold leading-none">1</span>
        <span className="absolute bottom-0 h-1 w-[7px] rounded-full bg-[#9b9b9b]" />
      </div>
      <OutlookLogo className="ml-[23px] h-[29px] w-[30px]" />
      <svg viewBox="0 0 28 28" className="ml-[26px] h-7 w-7">
        <path d="M8 .5a7.500 7.500 0 0 1 5 1A13 13 0 0 1 26.500 16 7.500 7.500 0 0 1 16 26.500 13 13 0 0 1 1.500 12 7.500 7.500 0 0 1 8 .5z" fill="#fff" stroke="#0fa8e8" strokeWidth="1.500" />
        <text x="14" y="21" textAnchor="middle" fontSize="20" fontWeight="800" fontFamily="Open Sans" fill="#15a5e0">S</text>
      </svg>
      <svg viewBox="0 0 30 30" className="ml-[23px] h-[30px] w-[30px]">
        <defs>
          <linearGradient id="edge" x1="0" y1="0" x2="1" y2=".4"><stop offset="0" stopColor="#2aa5e8" /><stop offset="1" stopColor="#5fd65a" /></linearGradient>
        </defs>
        <path d="M15 0a15 15 0 0 1 15 14c0 5-4 7-8 7-3 0-4-1.500-3-3 2-4-1-7-5-7C8 11 3 14 1 22-2 10 5 0 15 0z" fill="url(#edge)" />
        <path d="M1 20C2 13 8 10 12 11c-4 5-1 13 6 14 4 .5 7-.5 9-2-4 7-14 9-20 4z" fill="#0f62a8" />
        <rect x="0" y="19" width="16" height="11" rx="1" fill="#d98a18" />
        <path d="M0 23.500h16" stroke="#8f5609" />
      </svg>
      <svg viewBox="0 0 30 30" className="ml-[24px] h-[30px] w-[30px]">
        <path d="M21 0l9 4v22l-9 4L9 18l-6 5-3-1.500v-13L3 7l6 5z" fill="#8a5cc7" />
        <path d="M21 0l9 4v22l-9 4z" fill="#c08cf2" />
        <path d="M3 11.500v7L6.500 15zM21 9v12l-7.500-6z" fill="#231f1f" />
      </svg>
      <div className="relative ml-[15px] flex h-12 w-12 items-center justify-center rounded-[5px] bg-[#343030]">
        <ChromeLogo className="h-[29px] w-[29px]" />
        <span className="absolute bottom-0 h-1 w-5 rounded-full bg-[#5fbdf0]" />
      </div>
      <div className="relative ml-[15px] flex h-12 w-[30px] items-center justify-center">
        <svg viewBox="0 0 30 30" className="h-[30px] w-[30px]">
          <path d="M22 0l8 3.500v23L22 30 2.500 11 0 13v-2.500L3.500 7.500z" fill="#1f8ad0" />
          <path d="M22 0L2.500 18.500 0 16.500V19.500l3.500 2.500L22 8z" fill="#1373b5" />
          <path d="M22 0l8 3.500v23L22 30z" fill="#36a9ee" />
        </svg>
        <span className="absolute bottom-0 h-1 w-[7px] rounded-full bg-[#9b9b9b]" />
      </div>
      <svg viewBox="0 0 14 8" className="ml-[39px] h-2 w-[14px]" fill="none" stroke="#fff" strokeWidth="1.600"><path d="M1 7l6-6 6 6" /></svg>
      <Cloud className="ml-[22px] h-[13px] w-5" />
      <div className="ml-[10px] flex h-12 w-[39px] items-center justify-center rounded-[5px] bg-[#4fc1ff] text-[#0a0a0a]">
        <MicGlyph className="h-5 w-[14px]" />
      </div>
      <div className="ml-[11px] w-[30px] text-center text-[13.500px] leading-[18.500px]">
        <div>ENG</div>
        <div>US</div>
      </div>
      <Wifi className="ml-[21px] h-4 w-[20px]" />
      <Speaker className="ml-[9px] h-[17px] w-5" />
      <Battery className="ml-[9px] h-[14px] w-5" />
      <div className="ml-auto mr-[10px] text-right text-[14px] leading-[19.500px] tracking-[0.150px]">
        <div>08:50 PM</div>
        <div>29-10-2023</div>
      </div>
      <svg viewBox="0 0 18 18" className="mr-[26px] h-[18px] w-[18px]" fill="none" stroke="#fff" strokeWidth="1.300">
        <path d="M10 1Q3.500 1 3.500 7.500v4L1 14.500h15l-2-3M6 15q2.500 3.500 5 0M7.500 6.500h4L7.500 11h4M12.500.8h4L12.500 5h4" />
      </svg>
    </div>
  );
}

/* ---------- local taskbar ---------- */

function LocalTaskbar() {
  return (
    <div className="flex h-[72px] items-center bg-[#dadada] pt-[1px] text-[#1b1b1b]">
      <svg viewBox="0 0 36 34" className="ml-[30px] h-[34px] w-9">
        <defs>
          <linearGradient id="haze" x1="0" y1="0" x2="0" y2="1"><stop offset="0" stopColor="#f9b32c" /><stop offset="1" stopColor="#ee7a1b" /></linearGradient>
        </defs>
        <path d="M23 0c8 3 12 10 11 18-1 9-8 15-17 15-7 0-13-4-15-11 14 3 24-8 21-22z" fill="url(#haze)" />
        <path d="M7 7.500h5M17 7.500h18M7 13.500h27M1 19.500h18M24 19.500h6M1 25.500h28" stroke="#f9d65c" strokeWidth="2.200" strokeLinecap="round" />
      </svg>
      <div className="ml-[11px] w-[120px] text-[17px] leading-6">
        <div>28°C</div>
        <div className="text-[#626262]">Haze</div>
      </div>
      <WindowsLogo id="local-win" from="#4fd0fc" to="#0069cc" className="ml-[412px] h-[35px] w-[35px]" />
      <div className="ml-[21px] flex h-[47px] w-[328px] items-center rounded-full border-2 border-[#c9c9c9] bg-[#f4f4f4] pl-[15px] text-[#5f5f5f]">
        <svg viewBox="0 0 22 22" className="h-[22px] w-[22px]" fill="none" stroke="#1e1e1e" strokeWidth="2.200" strokeLinecap="round"><circle cx="13" cy="9" r="7.600" /><path d="M7 15l-5.500 5.500" /></svg>
        <span className="ml-[16px] text-[19.500px] tracking-[-0.050px]">Search</span>
      </div>
      <svg viewBox="0 0 34 34" className="ml-[19px] h-[34px] w-[34px]">
        <rect y="9" width="26" height="25" rx="1.500" fill="#262626" />
        <rect x="8" y="0" width="26" height="24" rx="1" fill="#f1f1f1" />
        <rect x="8" y="9" width="18" height="15" fill="#b5b5b5" />
      </svg>
      <ChatLogo id="local-chat" className="ml-[32px] h-[35px] w-[35px]" />
      <div className="relative ml-[31px] flex h-[60px] w-9 items-center justify-center">
        <OutlookLogo className="h-9 w-9" />
        <span className="absolute bottom-0 h-[5px] w-[9px] rounded-full bg-[#767676]" />
      </div>
      <div className="relative ml-[30px] flex h-[60px] w-9 items-center justify-center">
        <ChromeLogo className="h-[37px] w-[37px]" />
        <span className="absolute bottom-0 h-[5px] w-[9px] rounded-full bg-[#767676]" />
      </div>
      <div className="ml-5 h-[58px] w-[56px] rounded-[6px] border border-[#cfcfcf] bg-[#e9e9e9]">
        <div className="relative flex h-[56px] w-[51px] items-center justify-center rounded-[5px] border-r border-[#cfcfcf] bg-[#f1f1f1]">
          <TeamsLogo className="h-9 w-9" />
          <span className="absolute right-0 top-[9px] h-4 w-4 rounded-full border border-[#888] bg-[#c50f2f] shadow-[inset_0_0_0_1px_#fff]" />
          <span className="absolute -bottom-px h-[5px] w-[23px] rounded-full bg-[#0a78d4]" />
        </div>
      </div>
      <svg viewBox="0 0 18 10" className="ml-[100px] h-[10px] w-[18px]" fill="none" stroke="#1b1b1b" strokeWidth="1.400"><path d="M1 9l8-8 8 8" /></svg>
      <div className="relative ml-[15px]">
        <Cloud className="h-[16px] w-6" />
        <svg viewBox="0 0 14 14" className="absolute -bottom-[4px] -right-[2px] h-[14px] w-[14px]" fill="none" stroke="#0a63b5" strokeWidth="1.300">
          <circle cx="7" cy="7" r="7" fill="#fff" stroke="none" />
          <path d="M3 6.500a4 4 0 0 1 7-2.500V2.500M11 7.500a4 4 0 0 1-7 2.500v1.500" />
        </svg>
      </div>
      <svg viewBox="0 0 24 24" className="ml-[12px] h-6 w-6">
        <circle cx="12" cy="12" r="11" fill="#e9eeee" stroke="#858585" strokeWidth="1.500" />
        <path d="M3 11q5-7 10-4l-2 3 6 1-2-6" fill="none" stroke="#5db63f" strokeWidth="2.400" />
        <path d="M12 9q-2 5 3 7 5 1 4-3l3 1-4 8" fill="none" stroke="#2d86c8" strokeWidth="2.300" />
      </svg>
      <div className="ml-[6px] flex h-[60px] w-12 items-center justify-center rounded-[6px] border-b-2 border-[#004a8f] bg-[#0067c0] text-white">
        <MicGlyph className="h-6 w-[17px]" />
      </div>
      <div className="ml-[14px] w-10 text-center text-[16.500px] leading-[23px]">
        <div>ENG</div>
        <div>US</div>
      </div>
      <Wifi className="ml-[24px] h-[18px] w-6" />
      <Speaker className="ml-[12px] h-5 w-[25px]" />
      <Battery className="ml-[11px] h-4 w-[25px]" />
      <div className="ml-auto mr-[11px] text-right text-[17px] leading-[23px]">
        <div>20:50</div>
        <div className="tracking-[0.080px]">29-10-2023</div>
      </div>
      <div className="mr-[29px] flex h-6 w-6 items-center justify-center rounded-full bg-[#0a78d4] text-[14px] text-white">7</div>
    </div>
  );
}

function Participants() {
  return (
    <div className="ml-[21px] flex w-[307px] flex-col items-center bg-[#1f1f1f]">
      <div className="mt-[227px] flex h-[206px] w-[206px] items-center justify-center rounded-full bg-[#dfe6da] pb-[4px] text-[79px] font-bold text-[#2f421f]">AA</div>
      <div className="mt-[9px] text-[14px] leading-[34px] tracking-[0.200px] text-[#f0f0f0]">A, Aswani</div>
      <div className="mt-[229px] flex h-[167px] w-[301px] items-center justify-center bg-[#333]">
        <div className="flex h-[70px] w-[70px] items-center justify-center rounded-full bg-[#d0dbe0] text-[26px] font-bold text-[#1f3a40]">AD</div>
      </div>
    </div>
  );
}

export default function App() {
  return (
    <div className={`flex h-[1080px] w-[1920px] flex-col overflow-hidden bg-[#949494] ${segoe}`}>
      <div className="h-[1008px] px-[2px] pb-[2px] pt-[2px]">
        <div className="relative flex h-[1004px] flex-col overflow-hidden rounded-[8px] bg-[#1c1c1c]">
          <CallTitleBar />
          <CallToolbar />
          <div className="h-[5px] shrink-0 bg-[#1f1f1f]" />
          <div className="flex pl-6">
            <div className="flex h-[876px] w-[1562px] shrink-0 flex-col">
              <TabStrip />
              <AddressBar />
              <MyPathPage />
              <RemoteTaskbar />
            </div>
            <Participants />
          </div>
          <div className="absolute bottom-[14px] left-[14px] z-10 flex h-[30px] w-[79px] items-center justify-center rounded-[4px] bg-[#161414]/65 text-[14px] text-white">A, Aswani</div>
        </div>
      </div>
      <LocalTaskbar />
    </div>
  );
}
